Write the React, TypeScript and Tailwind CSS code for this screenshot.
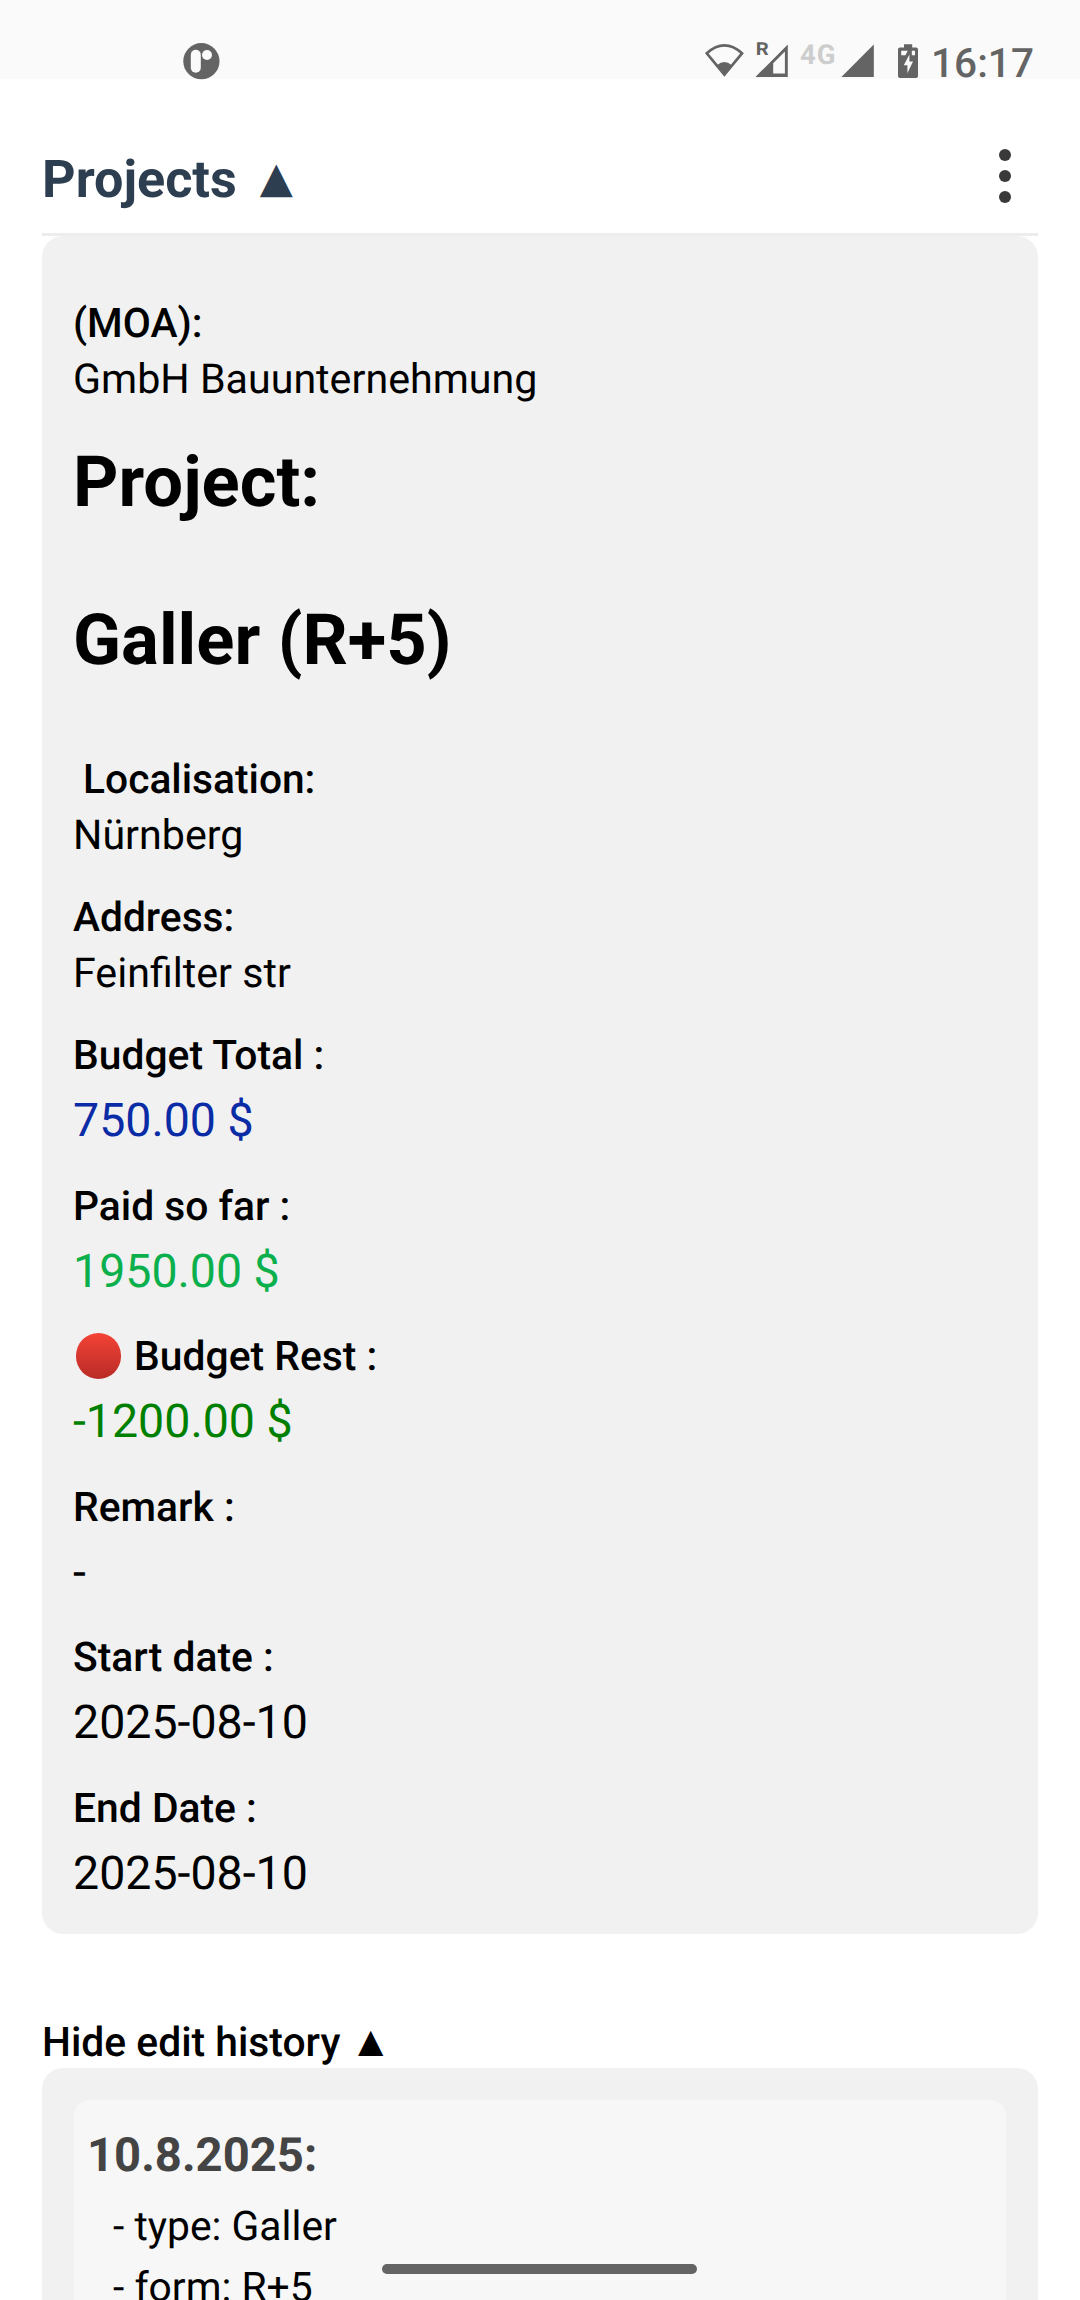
type Field = {
  label: string;
  value: string;
  tone?: string;
  alert?: boolean;
};

const amounts: Field[] = [
  { label: "Budget Total :", value: "750.00 $", tone: "text-[#0a2ba6]" },
  { label: "Paid so far :", value: "1950.00 $", tone: "text-[#0bb04c]" },
  { label: "Budget Rest :", value: "-1200.00 $", tone: "text-[#008000]", alert: true },
  { label: "Remark :", value: "-" },
  { label: "Start date :", value: "2025-08-10" },
  { label: "End Date :", value: "2025-08-10" },
];

function StatusBar() {
  return (
    <div className="flex h-[79px] shrink-0 bg-[#fafafa] pl-[183px] text-[#646464]">
      <svg width="37" height="79" viewBox="183 0 37 79" className="overflow-visible">
        <circle cx="201.4" cy="61.2" r="18.1" fill="currentColor" />
        <rect x="190.8" y="49.8" width="10" height="23" rx="5" fill="#fafafa" />
        <circle cx="207" cy="55" r="5" fill="#fafafa" />
      </svg>
      <svg className="ml-[485px]" width="39" height="79" viewBox="705 0 39 79">
        <path d="M706.8 53.3Q724.4 37.6 742 53.3L724.4 74.6Z" fill="none" stroke="currentColor" strokeWidth="2.7" />
        <path d="M717 65.3Q724.4 58.6 731.8 65.3L724.4 76Z" fill="currentColor" />
      </svg>
      <svg className="ml-[11px]" width="34" height="79" viewBox="755 0 34 79">
        <path
          fillRule="evenodd"
          d="M755.4 77L787.8 44.5V77ZM773.2 63.2V73.6H784.9V51.5Z"
          fill="currentColor"
        />
        <text
          transform="translate(755.8 54.8) scale(1.14 1)"
          fontSize="17.8"
          fontWeight="700"
          fill="currentColor"
        >
          R
        </text>
      </svg>
      <span className="mt-[44px] ml-[11px] w-[41px] text-[27.5px] leading-[21px] font-bold tracking-[1px] text-[#cdcdcd]">
        4G
      </span>
      <svg width="33" height="79" viewBox="841 0 33 79">
        <path d="M841.4 77L873.8 44.5V77Z" fill="currentColor" />
      </svg>
      <svg className="ml-[24px]" width="20" height="79" viewBox="898 0 20 79">
        <path
          d="M904 44.2H912.2V47.5H916A2 2 0 0 1 918 49.5V76A2 2 0 0 1 916 78H900A2 2 0 0 1 898 76V49.5A2 2 0 0 1 900 47.5H904Z"
          fill="currentColor"
        />
        <path
          d="M901.2 50.8H907.8L905.4 55.2H901.2ZM911.8 50.8H915V55.2H911.8ZM909.4 54.6V61.4H913L907.4 73.2V65.2H903.8Z"
          fill="#fafafa"
        />
      </svg>
      <span className="mt-[39px] ml-[13px] text-[40.6px] leading-[48px] font-medium">16:17</span>
    </div>
  );
}

function AmountField({ label, value, tone = "text-black", alert }: Field) {
  return (
    <div className="pb-[19px]">
      <div className="flex h-[57px] items-start text-[40.8px] leading-[56px] font-medium">
        {alert && (
          <span className="mt-[5px] mr-[13px] ml-[2.7px] size-[45.4px] rounded-full bg-linear-to-b from-[#f44336] to-[#b92b27]" />
        )}
        {label}
      </div>
      <div className={`text-[46.5px] leading-[74.6px] ${tone}`}>{value}</div>
    </div>
  );
}

function TextField({ label, value }: Field) {
  return (
    <div className="pb-[25px] text-[41.2px] leading-[56px]">
      <div className="text-[40.7px] font-medium whitespace-pre">{label}</div>
      <div className="mt-px">{value}</div>
    </div>
  );
}

export default function App() {
  return (
    <div className="relative flex h-[2300px] w-[1080px] flex-col overflow-hidden bg-white font-[Roboto,sans-serif] text-black [text-rendering:geometricPrecision]">
      <StatusBar />

      <header className="mx-[42px] flex h-[157px] shrink-0 justify-between border-b-[3px] border-[#ededed] pt-[70px]">
        <h1 className="mt-px flex h-[60px] text-[52.2px] leading-[60px] font-bold text-[#2c3e50]">
          Projects
          <span className="-mt-[2px] ml-[23px] font-['DejaVu_Sans'] text-[43px] leading-[60px] font-normal">▲</span>
        </h1>
        <div className="mr-[27px] flex h-[54px] flex-col justify-between">
          <span className="size-[12.4px] rounded-full bg-[#393939]" />
          <span className="size-[12.4px] rounded-full bg-[#393939]" />
          <span className="size-[12.4px] rounded-full bg-[#393939]" />
        </div>
      </header>

      <section className="mx-[42px] h-[1698px] shrink-0 rounded-[21px] bg-[#f1f1f1] pt-[59px] pl-[31px]">
        <div className="text-[41.2px] leading-[56px]">
          <div className="text-[40.8px] font-medium">(MOA):</div>
          <div className="mt-px">GmbH Bauunternehmung</div>
        </div>
        <h2 className="mt-[33px] text-[70.6px] leading-[84px] font-bold">Project:</h2>
        <h2 className="mt-[74px] mb-[68px] text-[70.6px] leading-[84px] font-bold">Galler (R+5)</h2>
        <TextField label=" Localisation:" value="Nürnberg" />
        <TextField label="Address:" value="Feinfilter str" />
        {amounts.map((f) => (
          <AmountField key={f.label} {...f} />
        ))}
      </section>

      <div className="mt-[81px] ml-[42px] flex h-[53px] shrink-0 text-[40.8px] leading-[54px] font-medium">
        Hide edit history
        <span className="-mt-px ml-[17.5px] font-['DejaVu_Sans'] text-[33px] leading-[54px] font-normal">▲</span>
      </div>

      <section className="mx-[42px] h-[400px] shrink-0 rounded-t-[21px] bg-[#f1f1f1] px-[32px] pt-[32px]">
        <div className="h-full rounded-t-[16px] bg-[#f7f7f7] pt-[27px] pr-[13px] pl-[13px]">
          <div className="text-[47.2px] leading-[56px] font-bold text-[#444444]">10.8.2025:</div>
          <ul className="mt-[13px] pl-[26px] text-[40.8px] leading-[61px]">
            <li>- type: Galler</li>
            <li>- form: R+5</li>
          </ul>
        </div>
      </section>

      <div className="absolute bottom-[26px] left-[382px] h-[10px] w-[315px] rounded-full bg-[#646464]" />
    </div>
  );
}
